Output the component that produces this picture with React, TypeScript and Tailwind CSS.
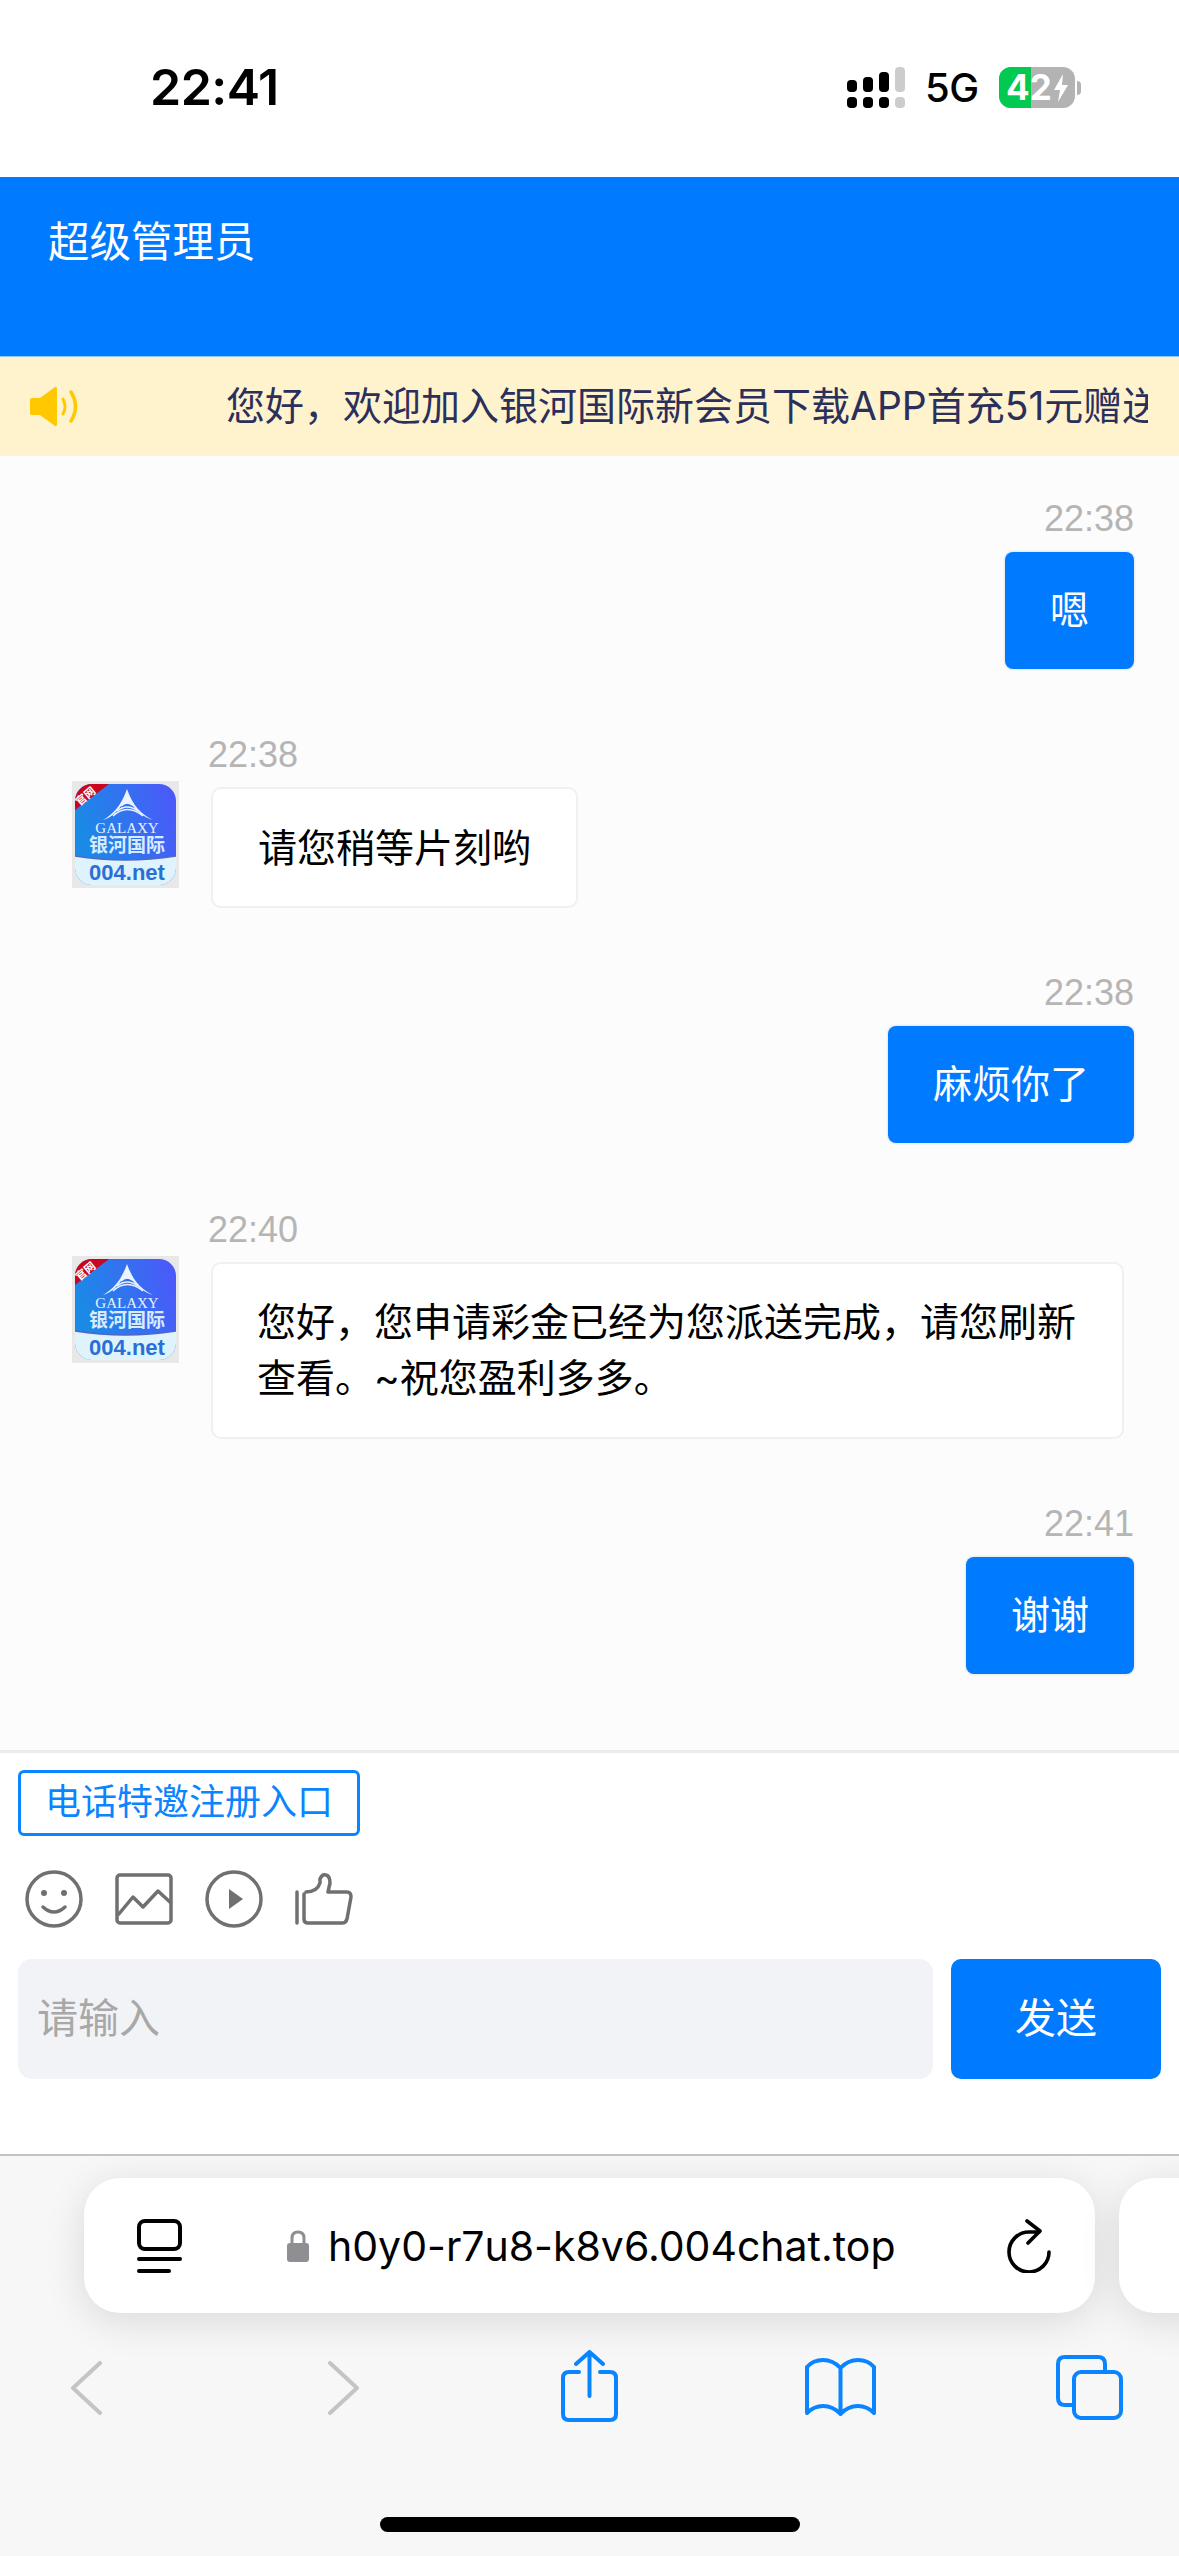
import React from "react";

const CJK = "font-['Inter','Noto_Sans_CJK_SC',sans-serif]";

function Avatar({ id }: { id: string }) {
  return (
    <div className="w-[107px] h-[107px] shrink-0 bg-[#e8e8e8] p-[3px]">
      <svg viewBox="0 0 101 101" className="w-full h-full">
        <defs>
          <linearGradient id={`g${id}`} x1="0" y1="0.3" x2="1" y2="0">
            <stop offset="0" stopColor="#1a8ae6" />
            <stop offset="1" stopColor="#4f56fb" />
          </linearGradient>
          <clipPath id={`c${id}`}><rect x="0" y="0" width="101" height="101" rx="17" /></clipPath>
        </defs>
        <g clipPath={`url(#c${id})`}>
          <rect width="101" height="101" fill={`url(#g${id})`} />
          <path d="M0 72 Q50 80 101 72 V101 H0 Z" fill="#def3fc" />
          <path d="M0 72 Q50 80 101 72" fill="none" stroke="#5066c8" strokeWidth="1.6" />
          <path d="M0 0 H34 L0 26 Z" fill="#c9061f" />
          <text x="11" y="16" textAnchor="middle" fontSize="11" fill="#fff" fontWeight="700" transform="rotate(-40 11 13)" fontFamily="'Noto Sans CJK SC',sans-serif">官网</text>
          <path d="M28 36 C38 30 46 22 52 5 C58 22 66 30 78 36 C68 33 62 27 58 22 Q52 17 46 22 C42 27 38 33 28 36 Z" fill="#eaf3ff" />
          <path d="M38 32 Q52 19 68 32 M42 27 Q52 19 63 27 M46 22 Q52 16 59 22" fill="none" stroke="#eaf3ff" strokeWidth="1.5" />
          <text x="52" y="49" textAnchor="middle" fontSize="15" fill="#e8f1ff" fontFamily="'Liberation Serif',serif">GALAXY</text>
          <text x="52" y="68" textAnchor="middle" fontSize="19" fontWeight="700" fill="#d8ecff" fontFamily="'Noto Sans CJK SC',sans-serif">银河国际</text>
          <text x="52" y="96" textAnchor="middle" fontSize="22" fontWeight="700" fill="#2a6fd6" fontFamily="'Liberation Sans',sans-serif">004.net</text>
        </g>
      </svg>
    </div>
  );
}

function Time({ children, left }: { children: string; left?: boolean }) {
  return <div className={`text-[36px] leading-[44px] text-[#b5b5b5] font-['Liberation_Sans',sans-serif] ${left ? "text-left" : "text-right"}`}>{children}</div>;
}

function Right({ time, text, className }: { time: string; text: string; className: string }) {
  return (
    <div className={`flex flex-col items-end pr-[45px] ${className}`}>
      <Time>{time}</Time>
      <div className="mt-[11px] h-[117px] px-[45px] flex items-center bg-[#007aff] rounded-[8px] text-white text-[39px] shadow-[0_0_0_1.5px_#eeeeee]">{text}</div>
    </div>
  );
}

function Left({ id, time, children, className, bubble }: { id: string; time: string; children: React.ReactNode; className: string; bubble: string }) {
  return (
    <div className={`flex pl-[72px] ${className}`}>
      <div className="mt-[48px]"><Avatar id={id} /></div>
      <div className="ml-[29px] flex flex-col items-start">
        <Time left>{time}</Time>
        <div className={`mt-[10px] ml-[3px] bg-white border-2 border-[#f0f0f0] rounded-[10px] text-black text-[39px] leading-[56px] ${bubble}`}>{children}</div>
      </div>
    </div>
  );
}

export default function App() {
  return (
    <div className={`w-[1179px] h-[2556px] flex flex-col overflow-hidden bg-white ${CJK}`}>
      {/* status bar */}
      <div className="h-[177px] shrink-0 bg-white flex items-start justify-between pl-[150px] pr-[98px]">
        <div className="mt-[57px] text-[50px] leading-[60px] font-semibold text-black tracking-[-0.5px]">22:41</div>
        <div className="mt-[67px] flex items-start">
          <div className="flex gap-[6px]">
            {[12, 15, 20, 25].map((h, i) => (
              <div key={i} className="w-[10px] flex flex-col justify-end h-[41px] gap-[5px]">
                <div className={`rounded-[4px] ${i === 3 ? "bg-[#cccccc]" : "bg-black"}`} style={{ height: h }} />
                <div className={`h-[11px] rounded-[4px] ${i === 3 ? "bg-[#cccccc]" : "bg-black"}`} />
              </div>
            ))}
          </div>
          <div className="ml-[20px] w-[56px] text-[40px] leading-[41px] font-medium text-black tracking-[-0.5px]">5G</div>
          <div className="ml-[18px] flex items-center">
            <div className="relative w-[76px] h-[41px] rounded-[12px] bg-[#b3b3b3] overflow-hidden flex items-center">
              <div className="absolute left-0 top-0 bottom-0 w-[32px] bg-[#02c94f]" />
              <span className="relative ml-[7px] text-[35px] leading-[41px] font-bold text-white">42</span>
              <svg viewBox="0 0 16 28" className="absolute left-[54px] top-[7px] w-[16px] h-[28px]">
                <path d="M10 0 L1 16 H7 L5 28 L15 11 H9 Z" fill="#fff" />
              </svg>
            </div>
            <div className="ml-[2px] w-[4px] h-[14px] rounded-r-full bg-[#b3b3b3]" />
          </div>
        </div>
      </div>

      {/* header */}
      <div className="h-[179px] shrink-0 bg-[#007aff] pl-[48px] pt-[39px] text-white text-[41.5px] leading-[52px]">超级管理员</div>

      {/* notice */}
      <div className="h-[100px] shrink-0 border-t border-[#8cc4ff] bg-[#fef3cd] flex items-center">
        <div className="ml-[30px] w-[49px] h-[41px]">
          <svg viewBox="0 0 49 41" className="w-full h-full">
            <path d="M2 12 H10 L25 1 Q27 0 27 3 V38 Q27 41 25 40 L10 29 H2 Q0 29 0 27 V14 Q0 12 2 12 Z" fill="#ffc800" />
            <path d="M33 13 Q37 20.5 33 28" fill="none" stroke="#ffc800" strokeWidth="3" strokeLinecap="round" />
            <path d="M41 6 Q50 20.5 41 35" fill="none" stroke="#ffc800" strokeWidth="3.5" strokeLinecap="round" />
          </svg>
        </div>
        <div className="ml-[147px] w-[922px] overflow-hidden whitespace-nowrap text-[39px] text-[#2b2f5b]">您好，欢迎加入银河国际新会员下载APP首充51元赠送</div>
      </div>

      {/* chat */}
      <div className="h-[1294px] shrink-0 bg-[#fcfcfc] flex flex-col">
        <Right className="mt-[41px]" time="22:38" text="嗯" />
        <Left id="a" className="mt-[64px]" time="22:38" bubble="px-[45px] h-[121px] flex items-center">请您稍等片刻哟</Left>
        <Right className="mt-[63px]" time="22:38" text="麻烦你了" />
        <Left id="b" className="mt-[65px]" time="22:40" bubble="w-[913px] h-[177px] px-[44px] pt-[30px]">您好，您申请彩金已经为您派送完成，请您刷新查看。~祝您盈利多多。</Left>
        <Right className="mt-[63px]" time="22:41" text="谢谢" />
      </div>

      {/* input area */}
      <div className="h-[404px] shrink-0 border-t-[3px] border-[#ebebeb] bg-white flex flex-col px-[18px]">
        <div className="mt-[17px] w-[342px] h-[66px] rounded-[6px] border-[3px] border-[#0a84ff] flex items-center justify-center text-[36px] leading-[54px] pb-[2px] text-[#0a84ff]">电话特邀注册入口</div>
        <div className="mt-[34px] h-[58px] flex items-center gap-[32px] pl-[7px]">
          <svg viewBox="0 0 58 58" className="w-[58px] h-[58px]" fill="none" stroke="#707070" strokeWidth="3.5">
            <circle cx="29" cy="29" r="27" />
            <circle cx="19" cy="23" r="3" fill="#707070" stroke="none" />
            <circle cx="39" cy="23" r="3" fill="#707070" stroke="none" />
            <path d="M18 37 Q29 47 40 37" strokeLinecap="round" />
          </svg>
          <svg viewBox="0 0 58 52" className="w-[58px] h-[52px]" fill="none" stroke="#707070" strokeWidth="3.5">
            <rect x="2" y="2" width="54" height="48" rx="3" />
            <path d="M3 42 L18 24 L28 34 L43 18 L56 30" strokeLinejoin="round" />
          </svg>
          <svg viewBox="0 0 58 58" className="w-[58px] h-[58px]" fill="none" stroke="#707070" strokeWidth="3.5">
            <circle cx="29" cy="29" r="27" />
            <path d="M24 19 L38 29 L24 39 Z" fill="#707070" stroke="none" />
          </svg>
          <svg viewBox="0 0 58 52" className="w-[58px] h-[52px]" fill="none" stroke="#707070" strokeWidth="3.5" strokeLinecap="round" strokeLinejoin="round">
            <path d="M2 19 V50" />
            <path d="M11 19 Q22 19 25 10 V6 Q27 1 31 2 Q35 3 35 10 L33 19 H52 Q56 19 56 24 L52 46 Q51 50 47 50 H13 Q9 50 9 46 V21" />
          </svg>
        </div>
        <div className="mt-[31px] flex gap-[18px]">
          <div className="w-[915px] h-[120px] rounded-[14px] bg-[#f2f3f7] pl-[19px] flex items-center text-[41px] text-[#a8a8a8]">请输入</div>
          <div className="w-[210px] h-[120px] rounded-[10px] bg-[#007aff] flex items-center justify-center text-[41px] text-white">发送</div>
        </div>
      </div>

      {/* safari bar */}
      <div className="h-[402px] shrink-0 border-t-2 border-[#c4c4c4] bg-[#f7f7f7] flex flex-col">
        <div className="mt-[22px] flex gap-[24px] pl-[84px]">
          <div className="w-[1011px] h-[135px] shrink-0 rounded-[36px] bg-white shadow-[0_8px_40px_rgba(0,0,0,0.12)] flex items-center">
            <svg viewBox="0 0 45 54" className="ml-[53px] w-[45px] h-[54px]" fill="none" stroke="#000" strokeWidth="4">
              <rect x="2" y="2" width="41" height="28" rx="6" />
              <path d="M2 40 H43 M2 52 H32" strokeLinecap="round" />
            </svg>
            <svg viewBox="0 0 22 32" className="ml-[105px] w-[22px] h-[32px]">
              <path d="M5 14 V8 Q5 2 11 2 Q17 2 17 8 V14" fill="none" stroke="#8e8e93" strokeWidth="3" />
              <rect x="0" y="13" width="22" height="19" rx="3" fill="#8e8e93" />
            </svg>
            <div className="ml-[19px] w-[566px] whitespace-nowrap text-[41px] leading-[50px] text-black">h0y0-r7u8-k8v6.004chat.top</div>
            <svg viewBox="0 0 44 54" className="ml-[113px] w-[44px] h-[54px]" fill="none" stroke="#000" strokeWidth="3.6" strokeLinecap="round" strokeLinejoin="round">
              <path d="M42 33 A20 20 0 1 1 22 13 H32" />
              <path d="M20 2 L33 12 L21 24" />
            </svg>
          </div>
          <div className="w-[200px] h-[135px] shrink-0 rounded-[36px] bg-white shadow-[0_8px_40px_rgba(0,0,0,0.12)]" />
        </div>
        <div className="mt-[37px] h-[72px] flex items-start pl-[71px]">
          <svg viewBox="0 0 31 54" className="mt-[11px] w-[31px] h-[54px]" fill="none" stroke="#c4c4c4" strokeWidth="4" strokeLinecap="round" strokeLinejoin="round">
            <path d="M29 2 L2 27 L29 52" />
          </svg>
          <svg viewBox="0 0 31 54" className="ml-[226px] mt-[11px] w-[31px] h-[54px]" fill="none" stroke="#c4c4c4" strokeWidth="4" strokeLinecap="round" strokeLinejoin="round">
            <path d="M2 2 L29 27 L2 52" />
          </svg>
          <svg viewBox="0 0 57 72" className="ml-[202px] w-[57px] h-[72px]" fill="none" stroke="#0a84ff" strokeWidth="4" strokeLinecap="round" strokeLinejoin="round">
            <path d="M18 22 H8 Q2 22 2 28 V64 Q2 70 8 70 H49 Q55 70 55 64 V28 Q55 22 49 22 H39" />
            <path d="M28.5 46 V3 M15 14 L28.5 2 L42 14" />
          </svg>
          <svg viewBox="0 0 71 58" className="ml-[187px] mt-[8px] w-[71px] h-[58px]" fill="none" stroke="#0a84ff" strokeWidth="4" strokeLinecap="round" strokeLinejoin="round">
            <path d="M35.5 10 V56 M35.5 10 Q28 2 18 2 Q8 2 2 9 V55 Q9 48 18 48 Q28 48 35.5 56 Q43 48 53 48 Q62 48 69 55 V9 Q63 2 53 2 Q43 2 35.5 10 Z" />
          </svg>
          <svg viewBox="0 0 67 65" className="ml-[180px] mt-[5px] w-[67px] h-[65px]" fill="none" stroke="#0a84ff" strokeWidth="4" strokeLinejoin="round">
            <path d="M17 50 H9 Q2 50 2 43 V9 Q2 2 9 2 H42 Q49 2 49 9 V17" />
            <rect x="18" y="17" width="47" height="46" rx="7" />
          </svg>
        </div>
        <div className="mt-[95px] mx-auto w-[420px] h-[15px] rounded-full bg-black" />
      </div>
    </div>
  );
}
